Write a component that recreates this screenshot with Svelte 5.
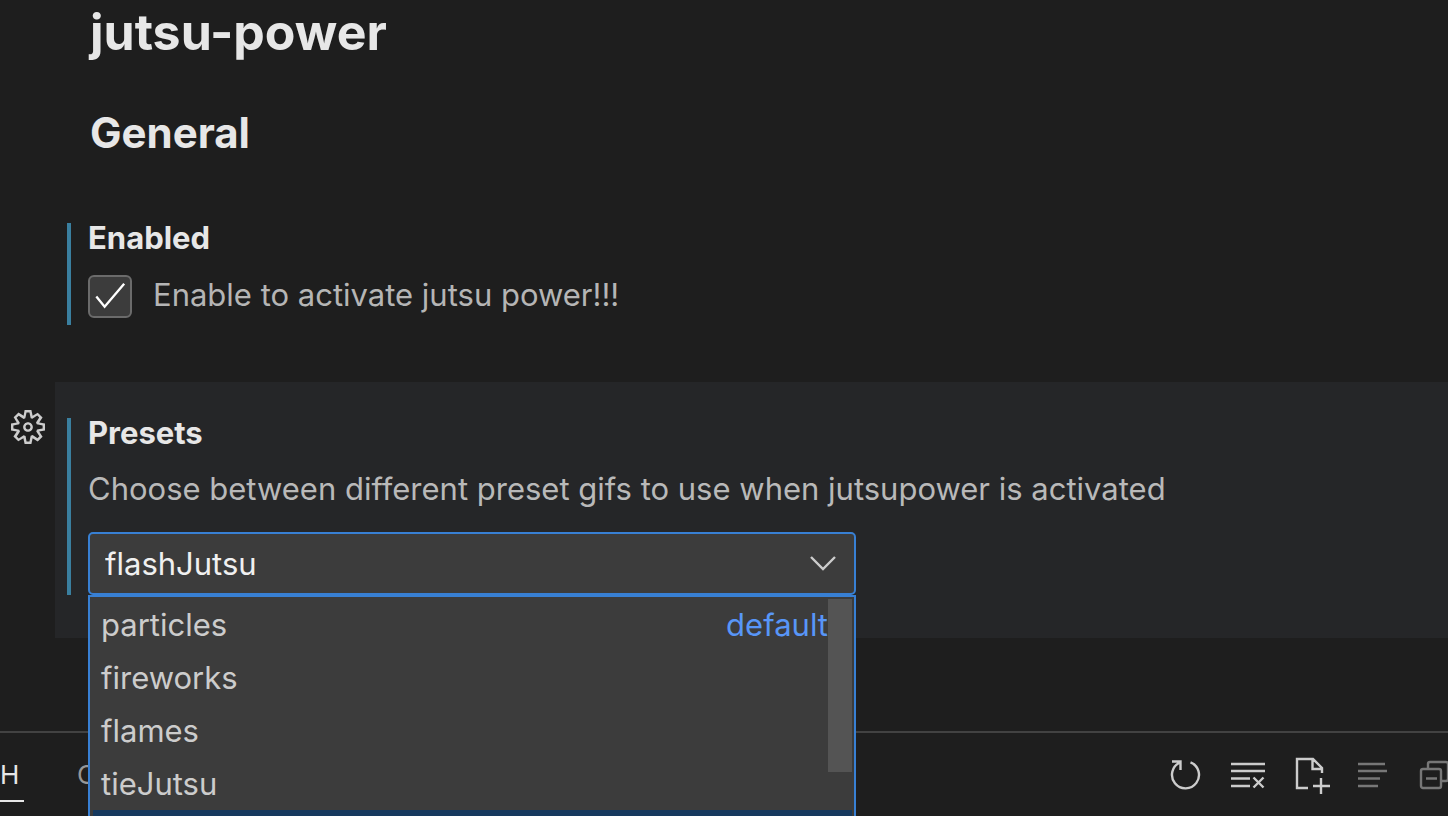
<script>
  let enabled = $state(true);
  let preset = $state('flashJutsu');
  const presets = ['particles', 'fireworks', 'flames', 'tieJutsu', 'flashJutsu'];
</script>

<div class="window">
  <main>
    <h1>jutsu-power</h1>
    <h2>General</h2>

    <section class="setting">
      <div class="body">
        <h3>Enabled</h3>
        <div class="check">
          <span class="box">
            <input type="checkbox" id="enabled" bind:checked={enabled} />
            {#if enabled}
              <svg viewBox="0 0 44 44" aria-hidden="true"><path d="M8 22 L16.5 32.5 L36.500 9" /></svg>
            {/if}
          </span>
          <label for="enabled">Enable to activate jutsu power!!!</label>
        </div>
      </div>
    </section>

    <section class="setting focused">
      <button class="gear" aria-label="More actions">
        <svg viewBox="0.6 0.6 14.8 14.8" aria-hidden="true">
          <path d="M9.1 4.4L8.6 2H7.4l-.5 2.4-.7.3-2-1.3-.9.8 1.3 2-.2.7-2.4.5v1.2l2.4.5.3.8-1.3 2 .8.8 2-1.3.8.3.4 2.3h1.2l.5-2.4.8-.3 2 1.3.8-.8-1.3-2 .3-.8 2.3-.4V7.4l-2.4-.5-.3-.8 1.3-2-.8-.8-2 1.3-.7-.2zM9.4 1l.5 2.4L12 2.1l2 2-1.4 2.1 2.4.4v2.8l-2.4.5L14 12l-2 2-2.1-1.4-.5 2.4H6.6l-.5-2.4L4 13.9l-2-2 1.4-2.1L1 9.4V6.6l2.4-.5L2.1 4l2-2 2.1 1.4.4-2.4h2.8zm.6 7c0 1.1-.9 2-2 2s-2-.9-2-2 .9-2 2-2 2 .9 2 2zM8 9c.6 0 1-.4 1-1s-.4-1-1-1-1 .4-1 1 .4 1 1 1z" />
        </svg>
      </button>
      <div class="body">
        <h3>Presets</h3>
        <label class="description" for="preset">Choose between different preset gifs to use when jutsupower is activated</label>
        <div class="dropdown">
          <select id="preset" bind:value={preset}>
            {#each presets as name}<option>{name}</option>{/each}
          </select>
          <svg class="chevron" viewBox="0 0 28 16" aria-hidden="true"><path d="M2 2 L14 14 L26 2" /></svg>
          <ul role="listbox" aria-label="Presets">
            {#each presets as name, i}
              <li role="option" aria-selected={name === preset}>
                <span>{name}</span>
                {#if i === 0}<span class="default">default</span>{/if}
              </li>
            {/each}
          </ul>
        </div>
      </div>
    </section>
  </main>

  <footer>
    <nav>
      <a class="active" href="#h">H</a>
      <a href="#c">C</a>
    </nav>
    <div class="actions">
      <button aria-label="Refresh">
        <svg viewBox="0 0 40 40" aria-hidden="true"><path d="M5 6.500H13.500V15M13 7.500A13.500 13.500 0 1 0 23.500 7.300" /></svg>
      </button>
      <button aria-label="Clear">
        <svg viewBox="0 0 40 40" aria-hidden="true"><path d="M1 9H35M1 16H35M1 23.500H20M1 31H20M23.500 22.500 33.500 32.500M33.500 22.500 23.500 32.500" /></svg>
      </button>
      <button aria-label="New file">
        <svg viewBox="0 0 40 40" aria-hidden="true"><path d="M15 33H4V4H20L29 13V18M19.500 4V14H29M28 23V39M20 31H37" /></svg>
      </button>
      <button class="dim" aria-label="Word wrap">
        <svg viewBox="0 0 40 40" aria-hidden="true"><path d="M2 9H29M2 16H31M2 23.500H24M2 31H22" /></svg>
      </button>
      <button class="dim" aria-label="Collapse all">
        <svg viewBox="0 0 40 40" aria-hidden="true"><rect x="2" y="14" width="20" height="19" rx="2" /><path d="M7 23.500H18M9 13V9Q9 7 11 7H27Q29 7 29 9V24Q29 26 27 26H23" /></svg>
      </button>
    </div>
  </footer>
</div>

<style>
  :global(body) {
    margin: 0;
    background: #1e1e1e;
  }
  * {
    box-sizing: border-box;
  }
  .window {
    display: flex;
    flex-direction: column;
    height: 100vh;
    overflow: hidden;
    color: #cccccc;
    font-family: Inter, sans-serif;
    font-size: 31px;
    line-height: 40px;
  }
  main {
    flex: 1;
    min-height: 0;
  }
  h1,
  h2,
  h3 {
    margin: 0;
    color: #e7e7e7;
    font-weight: 700;
  }
  h1,
  h2 {
    padding-left: 90px;
  }
  h1 {
    font-size: 50px;
    line-height: 64px;
  }
  h2 {
    margin-top: 40px;
    font-size: 42px;
    line-height: 58px;
  }
  h3 {
    font-size: 31px;
    line-height: 30px;
  }
  .setting {
    position: relative;
    margin-left: 55px;
    padding: 36px 12px 43px;
  }
  h2 + .setting {
    margin-top: 25px;
    padding-bottom: 57px;
  }
  .focused {
    background: #252628;
  }
  .body {
    border-left: 4px solid #3a7f9f;
    padding-left: 17px;
  }
  .check {
    display: flex;
    align-items: center;
    gap: 21px;
    padding: 22px 0 7px;
    color: #b5b5b5;
  }
  .check label {
    padding-bottom: 3px;
  }
  .box {
    display: grid;
    width: 44px;
    height: 43px;
  }
  .box input,
  .box svg {
    grid-area: 1 / 1;
    width: 44px;
    height: 43px;
    margin: 0;
  }
  .box input {
    appearance: none;
    background: #3c3c3c;
    border: 2px solid #6b6b6b;
    border-radius: 6px;
  }
  .box svg {
    pointer-events: none;
    stroke: #ffffff;
  }
  svg {
    display: block;
    fill: none;
    stroke: currentColor;
    stroke-width: 2.4;
  }
  button {
    padding: 0;
    border: 0;
    background: none;
    color: #cccccc;
  }
  .gear {
    position: absolute;
    top: 27px;
    left: -45px;
    width: 36px;
    height: 36px;
  }
  .gear svg {
    fill: currentColor;
    fill-rule: evenodd;
    stroke: none;
  }
  .description {
    display: block;
    padding: 21px 0 23px;
    color: #b9b9b9;
  }
  .dropdown {
    position: relative;
    max-width: 768px;
  }
  select {
    display: block;
    width: 100%;
    height: 63px;
    padding: 0 60px 0 15px;
    appearance: none;
    border: 2px solid #3880d4;
    border-radius: 5px;
    outline: 0;
    background: #3c3c3c;
    color: #f0f0f0;
    font: inherit;
  }
  .chevron {
    position: absolute;
    top: 23px;
    right: 19px;
    width: 28px;
    height: 16px;
    pointer-events: none;
  }
  ul {
    position: absolute;
    z-index: 1;
    top: 100%;
    left: 0;
    right: 0;
    margin: 0;
    padding: 1px 2px 1px 3px;
    border: 2px solid #3880d4;
    background: #3c3c3c;
    list-style: none;
  }
  ul::after {
    content: '';
    position: absolute;
    top: 2px;
    right: 2px;
    width: 24px;
    height: 173px;
    background: #545454;
  }
  li {
    display: flex;
    justify-content: space-between;
    padding: 7px 24px 6px 8px;
  }
  li[aria-selected='true'] {
    background: #16395e;
  }
  .default {
    color: #5896f8;
  }
  footer {
    display: flex;
    align-items: flex-start;
    justify-content: space-between;
    height: 85px;
    border-top: 2px solid #424242;
    overflow: hidden;
  }
  nav {
    display: flex;
    gap: 53px;
    padding-top: 22px;
    font-size: 26px;
  }
  nav a {
    padding-bottom: 5px;
    border-bottom: 2px solid transparent;
    color: #979797;
    line-height: 40px;
    text-decoration: none;
  }
  nav .active {
    width: 24px;
    border-color: #e7e7e7;
    color: #e7e7e7;
  }
  .actions {
    display: flex;
    gap: 23px;
    margin-right: -11px;
    padding-top: 22px;
  }
  .actions button,
  .actions svg {
    width: 40px;
    height: 40px;
  }
  .actions .dim {
    color: #777777;
  }
</style>
